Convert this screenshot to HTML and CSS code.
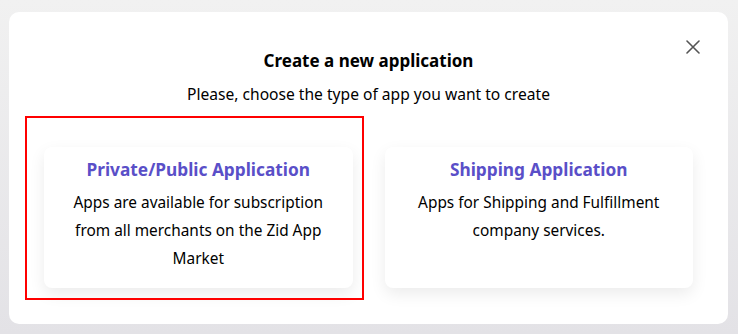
FILE: index.html
```html
<!DOCTYPE html>
<html lang="en">
<head>
  <meta charset="UTF-8" />
  <meta name="viewport" content="width=device-width, initial-scale=1.0"/>
  <title>Create a new application</title>
  <link rel="stylesheet" href="styles.css">
</head>
<body>
  <div class="backdrop">
    <div class="modal">
      <button class="close-btn" aria-label="Close">
        <svg width="14" height="14" viewBox="0 0 14 14"><path d="M1 1L13 13M13 1L1 13" stroke="#555" stroke-width="1.6" stroke-linecap="round"/></svg>
      </button>
      <h2 class="modal-title">Create a new application</h2>
      <p class="modal-sub">Please, choose the type of app you want to create</p>

      <div class="app-types">
        <div class="app-card selected">
          <h3>Private/Public Application</h3>
          <p>Apps are available for subscription from all merchants on the Zid App Market</p>
        </div>
        <div class="app-card">
          <h3>Shipping Application</h3>
          <p>Apps for Shipping and Fulfillment company services.</p>
        </div>
      </div>
    </div>
  </div>
</body>
</html>
```

FILE: styles.css
```css
html, body {
  margin: 0;
  height: 100%;
}
body {
  font-family: "Noto Sans", Roboto, sans-serif;
  color: #000;
  background: linear-gradient(#f1f1f1, #e3e2e6);
}
.backdrop {
  padding: 12px 10px 10px 9px;
  height: 100%;
  box-sizing: border-box;
}
.modal {
  position: relative;
  background: #fff;
  border-radius: 10px;
  height: 312px;
  box-sizing: border-box;
  padding: 38px 35px 0 35px;
  text-align: center;
}
.close-btn {
  position: absolute;
  top: 28px;
  right: 28px;
  background: none;
  border: none;
  padding: 0;
  cursor: pointer;
  line-height: 0;
}
.modal-title {
  margin: 0;
  font-size: 17px;
  font-weight: 700;
  line-height: 22px;
}
.modal-sub {
  margin: 11px 0 0;
  font-size: 15.6px;
  line-height: 22px;
}
.app-types {
  display: flex;
  gap: 32px;
  margin-top: 42px;
}
.app-card {
  flex: 1;
  height: 141px;
  box-sizing: border-box;
  background: #fff;
  border-radius: 8px;
  box-shadow: 0 6px 16px rgba(0, 0, 0, 0.08);
  padding: 12px 24px 0;
  position: relative;
}
.app-card.selected::after {
  content: "";
  position: absolute;
  top: -31px;
  left: -19px;
  right: -11px;
  bottom: -12px;
  border: 2px solid #f00;
  pointer-events: none;
}
.app-card h3 {
  margin: 0;
  font-size: 17.3px;
  font-weight: 700;
  color: #5a4fc8;
  line-height: 22px;
}
.app-card p {
  margin: 8px 0 0;
  font-size: 15.4px;
  line-height: 28px;
}
```
